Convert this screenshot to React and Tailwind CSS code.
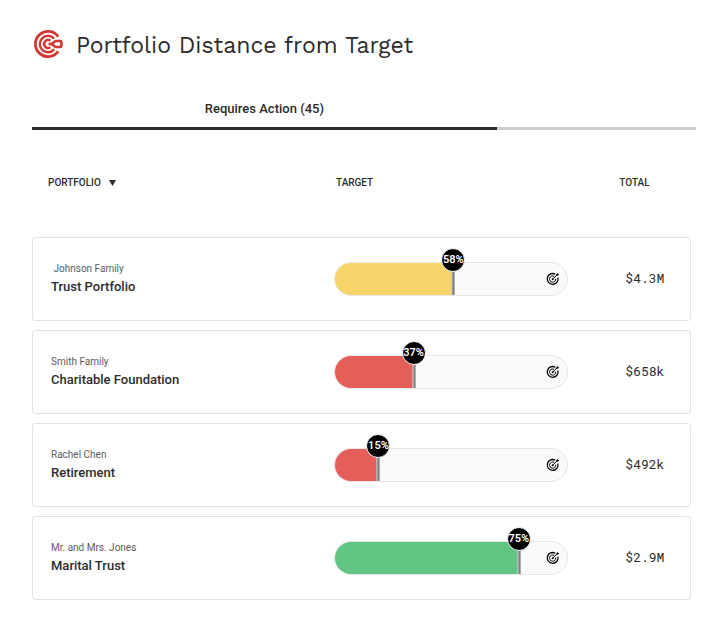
const portfolios = [
  { client: '\u00a0Johnson Family', name: 'Trust Portfolio', percent: 58, position: 51, tone: 'bg-[#f7d56b]', total: '$4.3M' },
  { client: 'Smith Family', name: 'Charitable Foundation', percent: 37, position: 34, tone: 'bg-[#e55f5a]', total: '$658k' },
  { client: 'Rachel Chen', name: 'Retirement', percent: 15, position: 19, tone: 'bg-[#e55f5a]', total: '$492k' },
  { client: 'Mr. and Mrs. Jones', name: 'Marital Trust', percent: 75, position: 79, tone: 'bg-[#61c483]', total: '$2.9M' },
];

function Logo() {
  return (
    <svg aria-hidden="true" className="size-8 shrink-0" fill="none" viewBox="0 0 32 32">
      <g stroke="#cf3a34">
        <path d="M26.2 7.6A12.6 12.6 0 1 0 26.2 22.4" strokeWidth="2.8" />
        <path d="M22.2 9.6A8.2 8.2 0 1 0 22.2 20.4" strokeWidth="2.4" />
        <path d="M18.4 11.7A4 4 0 1 0 18.4 18.3" strokeWidth="2.4" />
        <path d="M19.5 15L23.6 12H29L29.6 15L29 18H23.6Z" strokeLinejoin="round" strokeWidth="2.6" />
        <path d="M16.5 15H21.5" strokeWidth="2.6" />
      </g>
    </svg>
  );
}

function GoalIcon() {
  return (
    <svg aria-hidden="true" className="size-[14px] shrink-0 text-black" fill="none" stroke="currentColor" viewBox="0 0 14 14">
      <path d="M9.3 2.2A5.4 5.4 0 1 0 11.9 5.6" strokeWidth="1.3" />
      <path d="M8.2 4.4A3.1 3.1 0 1 0 9.7 6.7" strokeWidth="1" />
      <path d="M6.7 7.2L11.2 2.7" strokeWidth="1" />
      <circle cx="6.7" cy="7.2" fill="currentColor" r="1" stroke="none" />
      <path d="M10.2 3.8V2.4L11.8 0.9L12.1 2L13.2 2.3L11.7 3.8Z" fill="currentColor" stroke="none" />
    </svg>
  );
}

function TargetBar({ percent, position, tone }) {
  return (
    <div className="relative h-[34px] w-full max-w-[234px]">
      <div className="flex h-full items-center overflow-hidden rounded-full border border-[#e6e6e4] bg-[#fafafa]">
        <div className={`h-full shrink-0 ${tone}`} style={{ width: `${position}%` }} />
        <div className="flex grow justify-end pr-[7px]">
          <GoalIcon />
        </div>
      </div>
      <div
        className="absolute inset-y-px w-[3px] -translate-x-1/2 border-x border-r-[#bbb] border-l-white bg-[#444]"
        style={{ left: `${position}%` }}
      />
      <span
        className="absolute -top-3.5 flex size-6 -translate-x-1/2 items-center justify-center rounded-full border border-white bg-black text-[11px] font-semibold text-white"
        style={{ left: `${position}%` }}
      >
        {percent}%
      </span>
    </div>
  );
}

function App() {
  return (
    <main className="min-h-screen bg-white pt-7 pr-6 pb-8 pl-8 font-['Roboto',sans-serif] text-[#2d2b2c]">
      <header className="flex items-center gap-3">
        <Logo />
        <h1 className="pt-0.5 font-['Work_Sans','Inter',sans-serif] text-[23px] leading-8 font-normal">
          Portfolio Distance from Target
        </h1>
      </header>

      <nav aria-label="Portfolio status" className="mt-[30px] flex">
        <button className="w-[70%] border-b-3 border-[#2d2b2c] pt-[7px] pb-2 text-[13px] leading-5 font-medium" type="button">
          Requires Action (45)
        </button>
        <div className="grow border-b-3 border-[#cccccc]" />
      </nav>

      <div className="mt-9 pr-[5px]">
        <table className="w-full table-fixed border-separate border-spacing-x-0 border-spacing-y-[9px] text-left">
          <thead>
            <tr className="text-[10px] leading-4">
              <th className="w-[302px] pb-[37px] pl-4 font-medium" scope="col">
                <button className="flex items-center gap-2" type="button">
                  PORTFOLIO
                  <svg aria-hidden="true" className="h-1.5 w-[7px]" fill="currentColor" viewBox="0 0 7 6">
                    <path d="M0 0H7L3.5 6Z" />
                  </svg>
                </button>
              </th>
              <th className="w-[43%] pb-[37px] pl-0.5 font-medium" scope="col">TARGET</th>
              <th className="pb-[37px] pl-0.5 font-medium" scope="col">TOTAL</th>
            </tr>
          </thead>
          <tbody>
            {portfolios.map((portfolio) => (
              <tr key={portfolio.name}>
                <td className="h-[84px] rounded-l border-y border-l border-[#e2e2e2] pl-[18px]">
                  <p className="text-[10px] leading-4 text-[#5c5c5c]">{portfolio.client}</p>
                  <p className="text-[13px] leading-5 font-medium">{portfolio.name}</p>
                </td>
                <td className="border-y border-[#e2e2e2]">
                  <TargetBar percent={portfolio.percent} position={portfolio.position} tone={portfolio.tone} />
                </td>
                <td className="rounded-r border-y border-r border-[#e2e2e2] pl-2 font-['Roboto_Mono','Liberation_Mono',monospace] text-[13px]">
                  {portfolio.total}
                </td>
              </tr>
            ))}
          </tbody>
        </table>
      </div>
    </main>
  );
}

export default App;
